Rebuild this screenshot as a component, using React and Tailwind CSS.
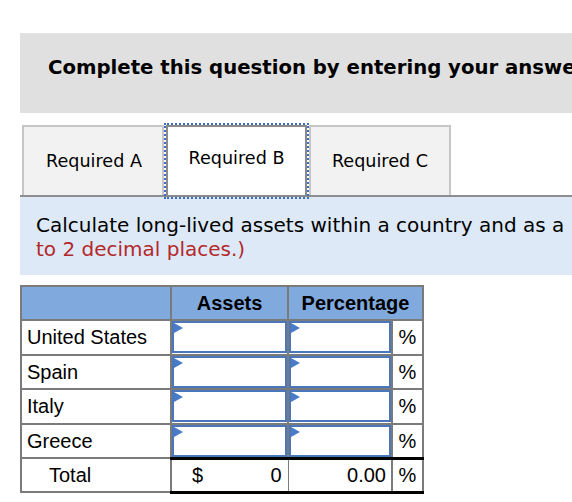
import React from 'react';

const rows = ['United States', 'Spain', 'Italy', 'Greece'];

const verdana = { fontFamily: '"DejaVu Sans", Verdana, sans-serif' };

const InputCell = () => (
  <div className="relative h-[32px] border-2 border-[#4a76bb] bg-white">
    <div className="absolute left-0 top-0 h-0 w-0 border-y-[5px] border-l-[9px] border-y-transparent border-l-[#4a7bc8]" />
  </div>
);

const App = () => {
  return (
    <div className="h-[502px] w-[572px] overflow-hidden bg-white pl-[20px] pt-[33px]">
      <div
        className="flex h-[80px] items-center overflow-hidden whitespace-nowrap bg-[#e0e0e0] pb-[10px] pl-[28px] text-[19.7px] font-bold text-black"
        style={verdana}
      >
        Complete this question by entering your answers in the tabs below.
      </div>

      <div
        className="mt-[12px] flex h-[72px] items-end border-b-2 border-[#8e8e8e] pl-[2px] text-[17.6px] text-black"
        style={verdana}
      >
        <div className="flex h-[70px] w-[142px] items-center justify-center border-2 border-b-0 border-[#c6c6c6] bg-[#f2f2f2] pl-[2px]">
          Required A
        </div>
        <div className="mx-[2px] -mb-[2px] flex h-[72px] w-[141px] items-center justify-center border-2 border-[#8a8a8a] bg-white pb-[6px] outline-2 outline-dotted outline-[#3f6fc4]">
          Required B
        </div>
        <div className="flex h-[70px] w-[142px] items-center justify-center border-2 border-b-0 border-[#c6c6c6] bg-[#f2f2f2]">
          Required C
        </div>
      </div>

      <div
        className="whitespace-nowrap bg-[#dde9f6] pb-[14px] pl-[16px] pt-[16px] text-[20px] leading-[24px] text-black"
        style={verdana}
      >
        <div>Calculate long-lived assets within a country and as a</div>
        <div className="text-[#b3282b]">to 2 decimal places.)</div>
      </div>

      <table
        className="mt-[10px] w-[402px] table-fixed border-collapse text-[20px] text-black"
        style={{ fontFamily: '"Liberation Sans", Arial, sans-serif' }}
      >
        <colgroup>
          <col className="w-[150px]" />
          <col className="w-[117px]" />
          <col className="w-[104px]" />
          <col className="w-[31px]" />
        </colgroup>
        <thead>
          <tr className="h-[34px] bg-[#80aade]">
            <th className="border-2 border-[#7b7b7b]" />
            <th className="border-2 border-[#7b7b7b] text-center font-bold">Assets</th>
            <th colSpan={2} className="border-2 border-[#7b7b7b] text-center font-bold">
              Percentage
            </th>
          </tr>
        </thead>
        <tbody>
          {rows.map((name) => (
            <tr key={name} className="h-[34.5px]">
              <td className="border-2 border-[#7b7b7b] pl-[5px]">{name}</td>
              <td className="border-2 border-[#7b7b7b] p-0">
                <InputCell />
              </td>
              <td className="border-2 border-[#7b7b7b] p-0">
                <InputCell />
              </td>
              <td className="border-2 border-[#7b7b7b] text-center">%</td>
            </tr>
          ))}
          <tr className="h-[34px]">
            <td className="border-2 border-[#7b7b7b] pl-[27px]">Total</td>
            <td className="border-x border-y-[3px] border-x-[#7b7b7b] border-y-black px-[6px]">
              <div className="flex justify-between pl-[14px]">
                <span>$</span>
                <span>0</span>
              </div>
            </td>
            <td className="border-x border-y-[3px] border-x-[#7b7b7b] border-y-black pr-[5px] text-right">
              0.00
            </td>
            <td className="border-x-2 border-y-[3px] border-x-[#7b7b7b] border-y-black text-center">%</td>
          </tr>
        </tbody>
      </table>
    </div>
  );
};

export default App;
